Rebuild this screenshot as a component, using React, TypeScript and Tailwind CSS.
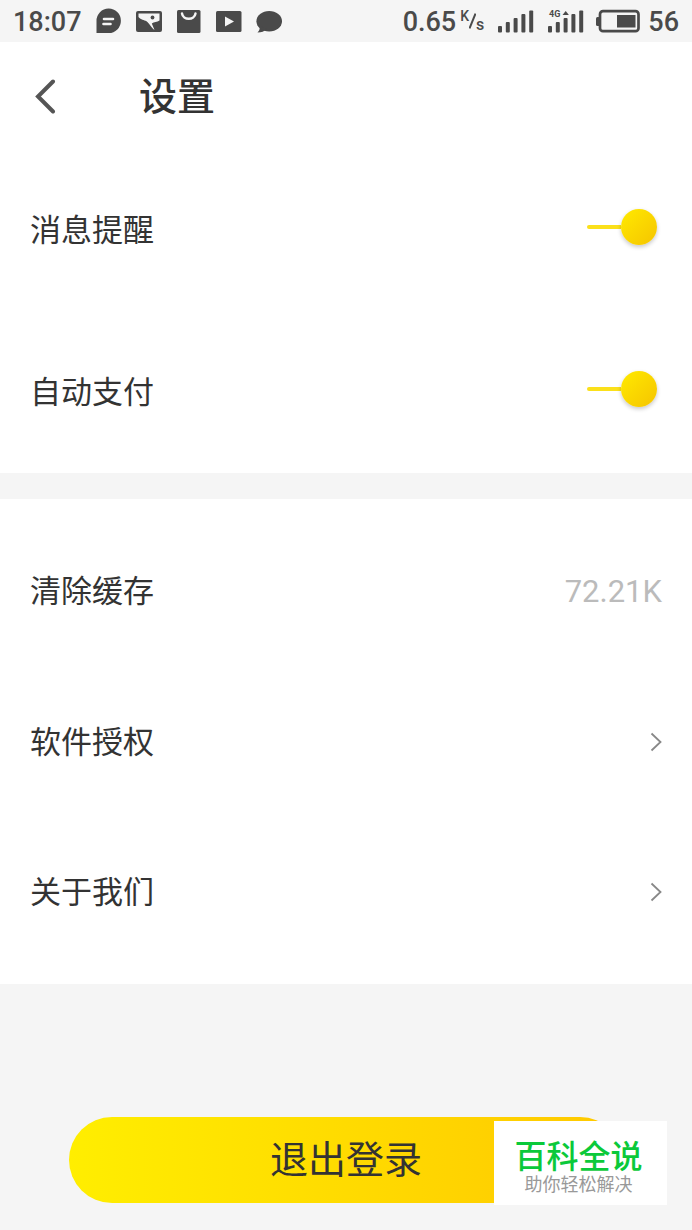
import { useState, type ReactNode } from 'react';

function StatusIcons() {
  return (
    <div className="flex gap-3.5" aria-hidden="true">
      <svg width="26" height="26" viewBox="0 0 26 26">
        <path d="M0.500 25V13A12.200 12.200 0 1 1 12.700 25Z" fill="#4a4a4a" />
        <path d="M8 11H17M7.500 16H14.500" stroke="#f5f5f5" strokeWidth="2.600" strokeLinecap="round" />
      </svg>
      <svg width="26" height="26" viewBox="0 0 26 26">
        <rect x="0" y="3" width="26" height="21" rx="2" fill="#4a4a4a" />
        <path d="M2.500 5.500H23.500V12.500C21 14.200 18 13.600 15.800 15.600L18.500 22C15 19.500 13 15 10.500 13.300C8 11.800 5 12 2.500 9Z" fill="#f5f5f5" />
        <circle cx="16.500" cy="9.500" r="1.900" fill="#4a4a4a" />
      </svg>
      <svg width="26" height="26" viewBox="0 0 26 26">
        <rect x="1" y="2" width="23.500" height="23" rx="1.500" fill="#4a4a4a" />
        <path d="M6 5.500C7 12.500 18.500 12.500 19.500 5.500" fill="none" stroke="#f5f5f5" strokeWidth="2.400" strokeLinecap="round" />
      </svg>
      <svg width="26" height="26" viewBox="0 0 26 26">
        <rect x="0" y="3" width="25.500" height="21" rx="1.500" fill="#4a4a4a" />
        <path d="M9 8.500V18.500L18 13.500Z" fill="#f5f5f5" />
      </svg>
      <svg width="26" height="26" viewBox="0 0 26 26">
        <ellipse cx="13.200" cy="13.200" rx="12.800" ry="10.300" fill="#4a4a4a" />
        <path d="M3 17.500C4.200 20 4 22 1.500 24.500C5.500 24.500 8.500 23.500 10.500 21Z" fill="#4a4a4a" />
      </svg>
    </div>
  );
}

function Signal({ network }: { network?: string }) {
  return (
    <svg width="36" height="26" viewBox="0 0 36 26" aria-hidden="true" fill="#4a4a4a">
      <rect x="0" y="18" width="4" height="6.500" rx="1" />
      <rect x="7.800" y="14" width="4" height="10.500" rx="1" />
      <rect x="15.600" y="10" width="4" height="14.500" rx="1" />
      <rect x="23.400" y="6" width="4" height="18.500" rx="1" />
      <rect x="31.200" y="2.500" width="4" height="22" rx="1" />
      {network && (
        <>
          <path d="M14.500 7L17.700 3L20.900 7Z" />
          <text x="1" y="9" fontSize="9" fontWeight="700" fontFamily="Roboto, sans-serif">{network}</text>
        </>
      )}
    </svg>
  );
}

function StatusBar() {
  return (
    <div className="flex h-[42px] items-center justify-between bg-[#f5f5f5] px-[13px] text-[27px] leading-none font-medium text-[#4a4a4a]">
      <div className="flex items-center gap-3.5">
        <span className="pt-0.5">18:07</span>
        <StatusIcons />
      </div>
      <div className="flex items-center">
        <span className="pt-0.5">0.65</span>
        <span className="ml-1 flex h-6 items-center">
          <span className="self-start text-[14px]">K</span>
          <svg width="7" height="18" viewBox="0 0 7 18" aria-hidden="true">
            <path d="M0.500 16.500L6.500 1.500" stroke="#4a4a4a" strokeWidth="2" />
          </svg>
          <span className="self-end text-[16px]">s</span>
        </span>
        <span className="ml-3.5 flex gap-3.5">
          <Signal />
          <Signal network="4G" />
        </span>
        <svg className="ml-3" width="44" height="26" viewBox="0 0 44 26" aria-hidden="true">
          <rect x="4" y="3.200" width="38.500" height="20" rx="3" fill="none" stroke="#4a4a4a" strokeWidth="2.700" />
          <rect x="0" y="9" width="4" height="9" rx="1.500" fill="#4a4a4a" />
          <rect x="21" y="7" width="18.500" height="12.500" fill="#4a4a4a" />
        </svg>
        <span className="ml-2 pt-0.5">56</span>
      </div>
    </div>
  );
}

function ToggleRow({ label }: { label: string }) {
  const [on, setOn] = useState(true);
  return (
    <label className="flex h-[162px] cursor-pointer items-center justify-between pr-[35px] pl-[30px]">
      <span>{label}</span>
      <span className="flex items-center pb-1.5">
        <input type="checkbox" role="switch" className="peer sr-only" checked={on} onChange={(e) => setOn(e.target.checked)} />
        <span className="order-1 h-1 w-[34px] rounded-l-full bg-[#fbe01a] peer-checked:order-0" />
        <span className="size-9 rounded-full bg-linear-to-br from-[#ffea00] to-[#f5c400] shadow-[0_2px_4px_rgba(0,0,0,0.22)]" />
      </span>
    </label>
  );
}

function LinkRow({ label }: { label: string }) {
  return (
    <a href="#" className="flex h-[150px] items-center justify-between px-[30px]">
      <span>{label}</span>
      <svg width="12" height="20" viewBox="0 0 12 20" fill="none" stroke="#888888" strokeWidth="1.800" aria-hidden="true">
        <path d="M1.500 1.500L10.500 10L1.500 18.500" />
      </svg>
    </a>
  );
}

function Section({ children, className = '' }: { children: ReactNode; className?: string }) {
  return <section className={`bg-white ${className}`}>{children}</section>;
}

export default function App() {
  return (
    <div className="min-h-screen bg-[#f5f5f5] font-[Roboto,'Noto_Sans_CJK_SC',sans-serif] text-[31px] leading-none text-[#333333]">
      <StatusBar />
      <header className="flex h-[107px] items-center bg-white pl-[34px]">
        <button type="button" aria-label="返回" className="flex">
          <svg width="22" height="36" viewBox="0 0 22 36" fill="none" stroke="#555555" strokeWidth="4" strokeLinecap="round" strokeLinejoin="miter" aria-hidden="true">
            <path d="M19 3.500L4 18.500L19 33.500" />
          </svg>
        </button>
        <h1 className="ml-[83px] pt-0.5 text-[38px] font-medium">设置</h1>
      </header>
      <main>
        <Section>
          <ToggleRow label="消息提醒" />
          <ToggleRow label="自动支付" />
        </Section>
        <Section className="mt-[26px] py-[17px]">
          <button type="button" className="flex h-[151px] w-full items-center justify-between px-[30px]">
            <span>清除缓存</span>
            <span className="text-[#bbbbbb]">72.21K</span>
          </button>
          <LinkRow label="软件授权" />
          <LinkRow label="关于我们" />
        </Section>
        <div className="relative px-[69px] pt-[133px] pb-[27px]">
          <button type="button" className="h-[86px] w-full rounded-full bg-linear-to-r from-[#ffee00] to-[#ffc800] text-[38px]">
            退出登录
          </button>
          <aside className="absolute right-[25px] bottom-[25px] flex h-[84px] w-[173px] flex-col items-center justify-end bg-white pr-1 pb-2">
            <strong className="text-[32px] font-medium text-[#0bc93a]">百科全说</strong>
            <span className="text-[18px] leading-6 text-[#999999]">助你轻松解决</span>
          </aside>
        </div>
      </main>
    </div>
  );
}
